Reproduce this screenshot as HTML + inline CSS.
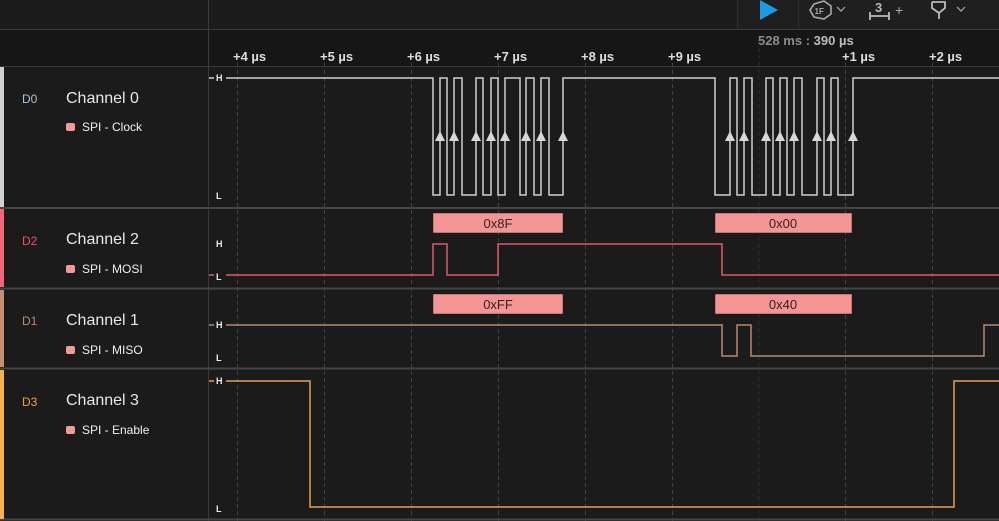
<!DOCTYPE html>
<html><head><meta charset="utf-8"><style>
html,body{margin:0;padding:0;background:#1b1b1b;width:999px;height:521px;overflow:hidden}
svg{display:block}
text{font-family:"Liberation Sans",Arial,sans-serif}
</style></head><body>
<svg width="999" height="521" viewBox="0 0 999 521" xmlns="http://www.w3.org/2000/svg">
<rect x="0" y="0" width="999" height="521" fill="#1b1b1b"/>
<rect x="0" y="0" width="999" height="29" fill="#1c1c1c"/>
<rect x="738" y="0" width="261" height="29" fill="#1f1f1f"/>
<line x1="737.5" y1="0" x2="737.5" y2="29" stroke="#2e2e2e"/>
<line x1="798.5" y1="0" x2="798.5" y2="29" stroke="#2e2e2e"/>
<polygon points="760,0 778,10 760,20" fill="#1e9be0"/>
<polygon points="814,4 824,1 831,6 831,14 824,19 814,17 810,10" fill="none" stroke="#aaa" stroke-width="1.6"/>
<text x="814.5" y="14" font-size="8" fill="#aaa" font-weight="bold">1F</text>
<polyline points="837,7 841,11 845,7" fill="none" stroke="#aaa" stroke-width="1.2"/>
<text x="875" y="12" font-size="13" fill="#bbb" font-weight="bold">3</text>
<path d="M870,12 V20 M870,16 H889 M889,12 V20" fill="none" stroke="#bbb" stroke-width="1.8"/>
<text x="895" y="15" font-size="14" fill="#aaa">+</text>
<path d="M932,2 H945 V8 L939,13 V19 M939,13 L932,8 V2" fill="none" stroke="#bbb" stroke-width="1.8"/>
<polyline points="957,7 961,11 965,7" fill="none" stroke="#aaa" stroke-width="1.2"/>
<line x1="0" y1="29.5" x2="999" y2="29.5" stroke="#3a3a3a"/>
<rect x="0" y="30" width="999" height="36" fill="#161616"/>
<line x1="208.5" y1="0" x2="208.5" y2="521" stroke="#3a3a3a"/>
<line x1="0" y1="66.5" x2="999" y2="66.5" stroke="#3a3a3a"/>
<text x="758" y="45" font-size="13" font-weight="bold" fill="#8a8a8a">528 ms : <tspan fill="#bbb">390 µs</tspan></text>
<g font-size="13" font-weight="bold" fill="#ddd">
<text x="233" y="61">+4 µs</text><text x="320" y="61">+5 µs</text><text x="407" y="61">+6 µs</text>
<text x="494" y="61">+7 µs</text><text x="581" y="61">+8 µs</text><text x="668" y="61">+9 µs</text>
<text x="842" y="61">+1 µs</text><text x="929" y="61">+2 µs</text>
</g>
<g stroke="#444" stroke-dasharray="4,3">
<line x1="237.5" y1="63" x2="237.5" y2="521"/><line x1="324.5" y1="63" x2="324.5" y2="521"/>
<line x1="411.5" y1="63" x2="411.5" y2="521"/><line x1="498.5" y1="63" x2="498.5" y2="521"/>
<line x1="585.5" y1="63" x2="585.5" y2="521"/><line x1="672.5" y1="63" x2="672.5" y2="521"/>
<line x1="845.5" y1="63" x2="845.5" y2="521"/><line x1="932.5" y1="63" x2="932.5" y2="521"/>
</g>
<line x1="759" y1="48" x2="759" y2="521" stroke="#2d2d2d" stroke-dasharray="4,3"/>
<g stroke="#454545" stroke-width="2">
<line x1="0" y1="208" x2="999" y2="208"/><line x1="0" y1="288.5" x2="999" y2="288.5"/>
<line x1="0" y1="368.5" x2="999" y2="368.5"/><line x1="0" y1="519.5" x2="999" y2="519.5"/>
</g>
<rect x="0" y="67" width="4" height="140" fill="#d0d0d0"/>
<rect x="0" y="209" width="4" height="78" fill="#f06878"/>
<rect x="0" y="290" width="4" height="77" fill="#c08f74"/>
<rect x="0" y="370" width="4" height="149" fill="#f5b050"/>
<g font-size="12"><text x="22" y="103" fill="#a8c4dc">D0</text><text x="22" y="245" fill="#f0505f">D2</text>
<text x="22" y="325" fill="#c0896a">D1</text><text x="22" y="406" fill="#f0a040">D3</text></g>
<g font-size="16" fill="#e8e8e8"><text x="66" y="103">Channel 0</text><text x="66" y="244">Channel 2</text>
<text x="66" y="325">Channel 1</text><text x="66" y="405">Channel 3</text></g>
<g fill="#f29a9a"><rect x="66" y="123" width="9" height="8" rx="2"/><rect x="66" y="265" width="9" height="8" rx="2"/>
<rect x="66" y="346" width="9" height="8" rx="2"/><rect x="66" y="426" width="9" height="8" rx="2"/></g>
<g font-size="12" fill="#f0f0f0"><text x="82" y="131">SPI - Clock</text><text x="82" y="273">SPI - MOSI</text>
<text x="82" y="354">SPI - MISO</text><text x="82" y="434">SPI - Enable</text></g>
<g font-size="9" font-weight="bold" fill="#eee">
<text x="216" y="81">H</text><text x="216" y="199">L</text><text x="216" y="247">H</text><text x="216" y="280">L</text>
<text x="216" y="328">H</text><text x="216" y="361">L</text><text x="216" y="384">H</text><text x="216" y="512">L</text></g>
<path fill="none" stroke="#cfcfcf" stroke-width="1.5" d="M209,78 H214 M226,78 H433 V195 H440 V78 H447 V195 H454 V78 H462 V195 H476 V78 H483 V195 H491 V78 H498 V195 H505 V78 H520 V195 H526 V78 H534 V195 H541 V78 H549 V195 H563 V78 H715 V195 H730 V78 H737 V195 H744 V78 H752 V195 H766 V78 H773 V195 H780 V78 H787 V195 H794 V78 H802 V195 H817 V78 H824 V195 H831 V78 H838 V195 H853 V78 H999"/>
<g fill="#d8d8d8">
<polygon points="440,131 435,141 445,141"/><polygon points="454,131 449,141 459,141"/><polygon points="476,131 471,141 481,141"/>
<polygon points="491,131 486,141 496,141"/><polygon points="505,131 500,141 510,141"/><polygon points="526,131 521,141 531,141"/>
<polygon points="541,131 536,141 546,141"/><polygon points="563,131 558,141 568,141"/>
<polygon points="730,131 725,141 735,141"/><polygon points="744,131 739,141 749,141"/><polygon points="766,131 761,141 771,141"/>
<polygon points="780,131 775,141 785,141"/><polygon points="794,131 789,141 799,141"/><polygon points="817,131 812,141 822,141"/>
<polygon points="831,131 826,141 836,141"/><polygon points="853,131 848,141 858,141"/>
</g>
<g fill="#f49696" stroke="#2a1a1a" stroke-width="0.5">
<rect x="433" y="213" width="130" height="20"/><rect x="715" y="213" width="137" height="20"/>
<rect x="433" y="294" width="130" height="20"/><rect x="715" y="294" width="137" height="20"/></g>
<g font-size="13" fill="#3a1f1f" text-anchor="middle">
<text x="498" y="228">0x8F</text><text x="783" y="228">0x00</text><text x="498" y="309">0xFF</text><text x="783" y="309">0x40</text></g>
<path fill="none" stroke="#e05a6a" stroke-width="1.5" d="M209,275 H214 M226,275 H433 V244 H447 V275 H498 V244 H722 V275 H999"/>
<path fill="none" stroke="#b98a70" stroke-width="1.5" d="M209,325 H214 M226,325 H722 V356 H737 V325 H751 V356 H984 V325 H999"/>
<path fill="none" stroke="#e8a050" stroke-width="1.5" d="M209,381 H214 M226,381 H310 V507 H954 V381 H999"/>
</svg>
</body></html>
